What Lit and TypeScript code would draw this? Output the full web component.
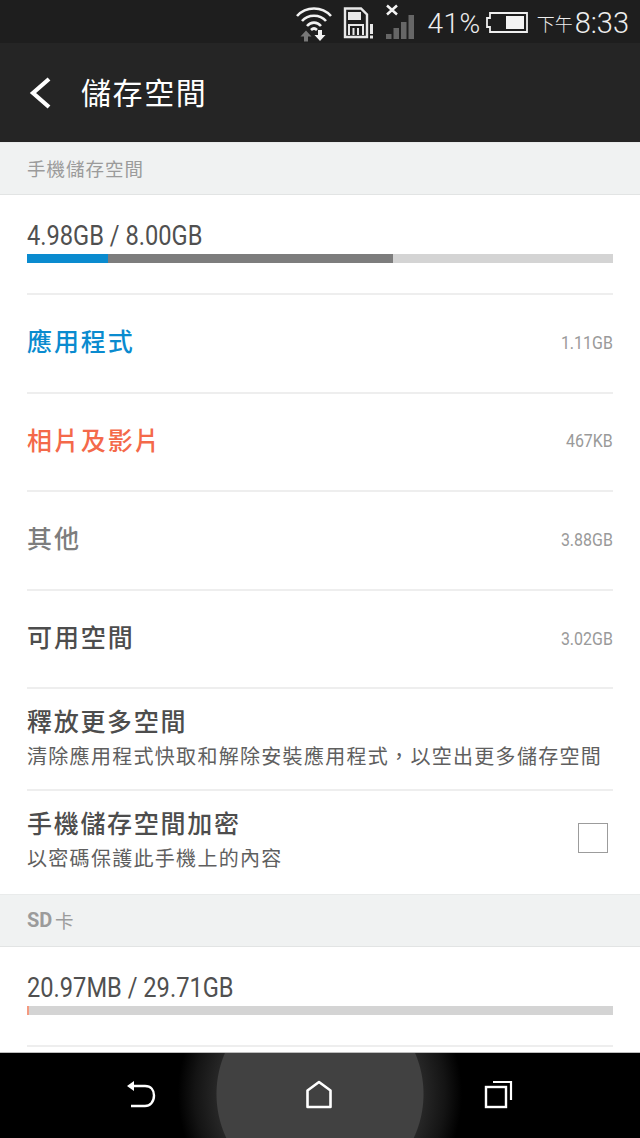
import { LitElement, html, css } from "lit";
import { customElement } from "lit/decorators.js";

const rows = [
  { name: "應用程式", size: "1.11GB", cls: "blue" },
  { name: "相片及影片", size: "467KB", cls: "red" },
  { name: "其他", size: "3.88GB", cls: "grey" },
  { name: "可用空間", size: "3.02GB", cls: "dark" },
];

@customElement("app-root")
export class AppRoot extends LitElement {
  static styles = css`
    :host { display: flex; flex-direction: column; width: 640px; height: 1138px; overflow: hidden; background: #fff;
      font-family: "Roboto", "Noto Sans CJK TC", sans-serif; color: #4d4d4d; }
    .status { height: 43px; flex: none; background: #1e1e1e; color: #eeeeee; display: flex; align-items: center; justify-content: flex-end; padding-right: 11px; box-sizing: border-box; }
    .status svg { display: block; flex: none; }
    .wifi { margin-right: 10px; }
    .sim { margin-right: 10px; }
    .sig { margin-right: 11px; }
    .pct { font-size: 28px; font-weight: 300; margin-right: 5px; letter-spacing: 0.5px; line-height: 43px; padding-top: 3px; }
    .bat { margin-right: 9px; }
    .ampm { font-family: "Noto Sans CJK TC", sans-serif; font-size: 18px; font-weight: 300; line-height: 43px; padding-top: 4px; margin-right: 2px; }
    .clock { font-size: 29px; font-weight: 300; line-height: 43px; padding-top: 3px; }
    .bar { height: 99px; flex: none; background: #252525; display: flex; align-items: center; padding-left: 29px; box-sizing: border-box; }
    .bar h1 { margin: 0 0 4px 30px; font: 400 30px/1 "Noto Sans CJK TC", sans-serif; letter-spacing: 1.6px; color: #fff; }
    .bar svg { display: block; }
    .content { flex: 1; min-height: 0; overflow: hidden; }
    .section { height: 53px; background: #f0f2f2; border-top: 1px solid #e9ebeb; border-bottom: 1px solid #e2e4e4; box-sizing: border-box; display: flex; align-items: center; padding: 0 0 2px 27px; font-size: 18.5px; letter-spacing: 1px; color: #9b9b9b; font-family: "Noto Sans CJK TC", sans-serif; }
    .section b { font-family: "Roboto"; font-weight: 700; letter-spacing: 0; margin-right: 5px; font-size: 20px; display: inline-block; width: 23px; }
    .inner { margin: 0 27px; }
    .usage { height: 100px; box-sizing: border-box; border-bottom: 2px solid #eeeeee; padding-top: 26px; }
    .cond { display: block; font-size: 28.5px; line-height: 30px; white-space: nowrap; transform-origin: left center; transform: scaleX(0.83); color: #505050; }
    .track { height: 9px; margin-top: 3px; background: #d4d4d4; display: flex; }
    .track i { display: block; height: 100%; }
    .row { height: 98.6px; box-sizing: border-box; border-bottom: 2px solid #eeeeee; display: flex; align-items: center; justify-content: space-between; }
    .row .name { font: 500 25px/1 "Noto Sans CJK TC", sans-serif; letter-spacing: 1.9px; padding-bottom: 5px; }
    .blue { color: #0a8bcf; } .red { color: #f4694a; } .grey { color: #7d7d7d; } .dark { color: #4d4d4d; }
    .row .val { font-size: 19px; color: #9a9a9a; transform: scaleX(0.84); transform-origin: right center; padding-bottom: 2px; }
    .two { display: flex; align-items: center; justify-content: space-between; box-sizing: border-box; }
    .two.a { height: 102px; border-bottom: 2px solid #eeeeee; }
    .two.b { height: 103px; }
    .a .txt { margin-bottom: 5px; }
    .b .txt { margin-bottom: 8px; }
    .t { font: 500 25px/38px "Noto Sans CJK TC", sans-serif; letter-spacing: 1.7px; color: #4d4d4d; }
    .s { font: 400 20px/34px "Noto Sans CJK TC", sans-serif; letter-spacing: 1.3px; color: #5f5f5f; white-space: nowrap; }
    .cb { width: 30px; height: 30px; box-sizing: border-box; border: 1px solid #9c9c9c; margin: 0 5px 9px 0; background: #fff; }
    .nav { height: 86px; flex: none; border-top: 1px solid #bdbdbd; box-sizing: border-box; display: flex; justify-content: center; align-items: center;
      background: radial-gradient(circle 200px at 320px 41px, #414141 0 103px, #262626 104px, #141414 125px, #000 142px); }
    .nav span { display: flex; justify-content: center; width: 177px; padding-bottom: 2px; }
    .nav .rec { padding-left: 3px; }
    .nav svg { display: block; }
  `;

  render() {
    return html`
      <div class="status">
        <svg class="wifi" width="38" height="40" viewBox="0 0 38 40" fill="none" stroke="#f2f2f2" stroke-width="2.6">
          <path d="M2 14 C11 4 27 4 36 14" /><path d="M7 19 C13 12 25 12 31 19" /><path d="M12 24 C16 19.5 22 19.5 26 24" /><path d="M16 28 C18 26 20 26 22 28" />
          <path d="M13 29 l5.5 6 h-3.5 v5 h-4 v-5 h-3.500 z" transform="translate(-2 -0.500)" fill="#777" stroke="none" />
          <path d="M22 30 h4 v5 h3.500 l-5.500 6 l-5.500 -6 h3.500 z" transform="translate(1 -2)" fill="#f2f2f2" stroke="none" />
        </svg>
        <svg class="sim" width="32" height="36" viewBox="0 0 32 36" fill="none">
          <path d="M2 4.500 H18 L24 10.500 V33 H2 Z" stroke="#e8e8e8" stroke-width="2.400" />
          <rect x="5" y="8" width="13" height="8" fill="#e8e8e8" />
          <path d="M6 31 V21 H20 V31 M10.500 31 V24 M15 31 V24" stroke="#e8e8e8" stroke-width="2" />
          <rect x="27" y="20" width="3" height="10" fill="#e8e8e8" /><rect x="27" y="31.500" width="3" height="3" fill="#e8e8e8" />
        </svg>
        <svg class="sig" width="31" height="36" viewBox="0 0 31 36" fill="none">
          <path d="M2 1.500 L12 10.500 M12 1.500 L2 10.500" stroke="#f4f4f4" stroke-width="2.500" />
          <rect x="1" y="30" width="5.500" height="5" fill="#666" /><rect x="8.500" y="24" width="5.500" height="11" fill="#666" />
          <rect x="16" y="18" width="5.500" height="17" fill="#666" /><rect x="23.500" y="11" width="5.500" height="24" fill="#666" />
        </svg>
        <span class="pct">41%</span>
        <svg class="bat" width="42" height="22" viewBox="0 0 42 22" fill="none">
          <path d="M1 7 H4 V2 H41 V21 H4 V16 H1 Z" stroke="#efefef" stroke-width="1.800" />
          <rect x="20" y="5" width="18" height="13" fill="#f4f4f4" />
        </svg>
        <span class="ampm">下午</span><span class="clock">8:33</span>
      </div>
      <div class="bar">
        <svg width="22" height="32" viewBox="0 0 22 32" fill="none"><path d="M20 2 L4 16 L20 30" stroke="#fff" stroke-width="4.200" /></svg>
        <h1>儲存空間</h1>
      </div>
      <div class="content">
        <div class="section">手機儲存空間</div>
        <div class="inner">
          <div class="usage">
            <span class="cond">4.98GB / 8.00GB</span>
            <div class="track"><i style="width:81px;background:#0a8bcf"></i><i style="width:285px;background:#7d7d7d"></i></div>
          </div>
          ${rows.map(r => html`<div class="row"><span class="name ${r.cls}">${r.name}</span><span class="val">${r.size}</span></div>`)}
          <div class="two a"><div class="txt"><div class="t">釋放更多空間</div><div class="s">清除應用程式快取和解除安裝應用程式，以空出更多儲存空間</div></div></div>
          <div class="two b"><div class="txt"><div class="t">手機儲存空間加密</div><div class="s">以密碼保護此手機上的內容</div></div><div class="cb"></div></div>
        </div>
        <div class="section"><b>SD</b>卡</div>
        <div class="inner">
          <div class="usage">
            <span class="cond">20.97MB / 29.71GB</span>
            <div class="track"><i style="width:2px;background:#f59a80"></i></div>
          </div>
        </div>
      </div>
      <div class="nav">
        <span><svg width="30" height="30" viewBox="0 0 30 30" fill="none"><path d="M7 1 V11 L0 6 Z" fill="#fff"/><path d="M6 6 H18 C24 6 27 10 27 15.500 C27 22 23 26 18 26 H4" stroke="#fff" stroke-width="2.400"/></svg></span>
        <span><svg width="28" height="30" viewBox="0 0 28 30" fill="none"><path d="M14 2 L25.500 10.500 V27 H2.500 V10.500 Z" stroke="#fff" stroke-width="2.600" stroke-linejoin="round"/></svg></span>
        <span class="rec"><svg width="30" height="30" viewBox="0 0 30 30" fill="none"><rect x="2" y="7" width="20" height="20" stroke="#fff" stroke-width="2.400"/><path d="M9 2 H27 V20" stroke="#fff" stroke-width="2.200"/></svg></span>
      </div>
    `;
  }
}
